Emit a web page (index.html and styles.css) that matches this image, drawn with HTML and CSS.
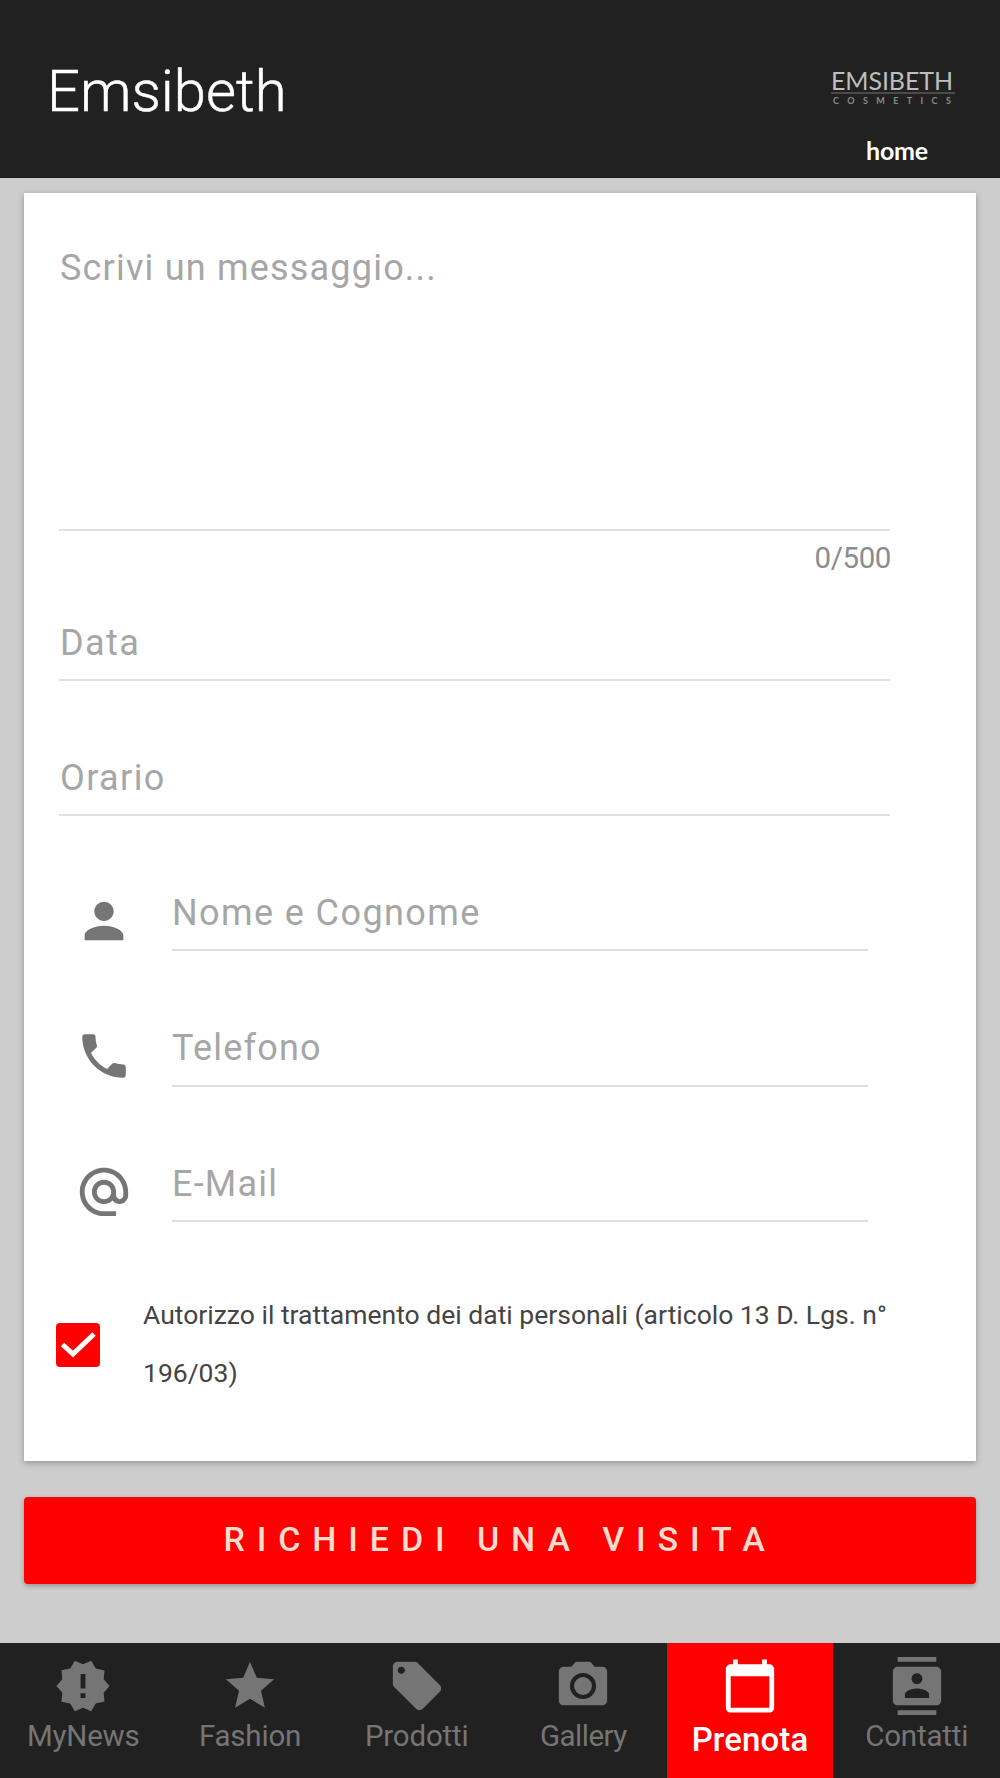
FILE: index.html
```html
<!DOCTYPE html>
<html lang="it">
<head>
<meta charset="utf-8">
<title>Emsibeth</title>
<link rel="stylesheet" href="styles.css">
</head>
<body>
<header class="topbar">
  <h1 class="title">Emsibeth</h1>
  <div class="brand">
    <div class="logo">EMSIBETH</div>
    <div class="logo-sub">COSMETICS</div>
    <a class="home">home</a>
  </div>
</header>
<main class="content">
  <form class="card">
    <div class="message">Scrivi un messaggio...</div>
    <div class="counter">0/500</div>
    <div class="field field-date">Data</div>
    <div class="field">Orario</div>
    <div class="icon-row">
      <svg class="icon" viewBox="0 0 24 24"><path d="M12 12c2.21 0 4-1.79 4-4s-1.79-4-4-4-4 1.79-4 4 1.79 4 4 4zm0 2c-2.67 0-8 1.34-8 4v2h16v-2c0-2.66-5.33-4-8-4z"/></svg>
      <div class="field">Nome e Cognome</div>
    </div>
    <div class="icon-row tight">
      <svg class="icon" viewBox="0 0 24 24"><path d="M6.62 10.79c1.44 2.83 3.76 5.14 6.59 6.59l2.2-2.2c.27-.27.67-.36 1.02-.24 1.12.37 2.33.57 3.57.57.55 0 1 .45 1 1V20c0 .55-.45 1-1 1-9.39 0-17-7.61-17-17 0-.55.45-1 1-1h3.5c.55 0 1 .45 1 1 0 1.25.2 2.45.57 3.57.11.35.03.74-.25 1.02l-2.2 2.2z"/></svg>
      <div class="field">Telefono</div>
    </div>
    <div class="icon-row tight">
      <svg class="icon" viewBox="0 0 24 24"><path d="M12 1.95c-5.52 0-10 4.48-10 10s4.48 10 10 10h5v-2h-5c-4.34 0-8-3.66-8-8s3.66-8 8-8 8 3.66 8 8v1.43c0 .79-.71 1.57-1.5 1.57s-1.5-.78-1.5-1.57v-1.43c0-2.76-2.24-5-5-5s-5 2.24-5 5 2.24 5 5 5c1.38 0 2.64-.56 3.54-1.47.65.89 1.77 1.47 2.96 1.47 1.97 0 3.5-1.6 3.5-3.57v-1.43c0-5.52-4.48-10-10-10zm0 13c-1.66 0-3-1.34-3-3s1.34-3 3-3 3 1.34 3 3-1.34 3-3 3z"/></svg>
      <div class="field">E-Mail</div>
    </div>
    <div class="consent">
      <svg class="checkbox" viewBox="0 0 44 44"><rect width="44" height="44" rx="4"/><path d="M6.5 21.5 17 31 38 11"/></svg>
      <p class="consent-text">Autorizzo il trattamento dei dati personali (articolo 13 D. Lgs. n°<br>196/03)</p>
    </div>
  </form>
  <button class="submit">RICHIEDI UNA VISITA</button>
</main>
<nav class="tabs">
  <a class="tab"><svg class="icon" viewBox="0 0 24 24"><path d="M23 12l-2.44-2.78.34-3.68-3.61-.82-1.89-3.18L12 3 8.6 1.54 6.71 4.72l-3.61.81.34 3.68L1 12l2.44 2.78-.34 3.69 3.61.82 1.89 3.18L12 21l3.4 1.46 1.89-3.18 3.61-.82-.34-3.68L23 12zm-10 5h-2v-2h2v2zm0-4h-2V7h2v6z"/></svg>MyNews</a>
  <a class="tab"><svg class="icon" viewBox="0 0 24 24"><path d="M12 17.27 18.18 21l-1.64-7.03L22 9.24l-7.19-.61L12 2 9.19 8.63 2 9.24l5.46 4.73L5.82 21z"/></svg>Fashion</a>
  <a class="tab"><svg class="icon" viewBox="0 0 24 24"><path d="M21.41 11.58l-9-9C12.05 2.22 11.55 2 11 2H4c-1.1 0-2 .9-2 2v7c0 .55.22 1.05.59 1.42l9 9c.36.36.86.58 1.41.58.55 0 1.05-.22 1.41-.59l7-7c.37-.36.59-.86.59-1.41 0-.55-.23-1.06-.59-1.42zM5.5 7C4.67 7 4 6.33 4 5.5S4.67 4 5.5 4 7 4.67 7 5.5 6.33 7 5.5 7z"/></svg>Prodotti</a>
  <a class="tab tab-gallery"><svg class="icon" viewBox="0 0 24 24"><path fill-rule="evenodd" d="M9 2 7.17 4H4c-1.1 0-2 .9-2 2v12c0 1.1.9 2 2 2h16c1.1 0 2-.9 2-2V6c0-1.1-.9-2-2-2h-3.17L15 2zM12 6.6a5.4 5.4 0 1 0 0 10.8 5.4 5.4 0 0 0 0-10.8z"/><circle cx="12" cy="12" r="3.7"/></svg>Gallery</a>
  <a class="tab active"><svg class="icon" viewBox="0 0 24 24"><path d="M20 3h-1V1h-2v2H7V1H5v2H4c-1.1 0-2 .9-2 2v16c0 1.1.9 2 2 2h16c1.1 0 2-.9 2-2V5c0-1.1-.9-2-2-2zm0 18H4V8h16v13z"/></svg>Prenota</a>
  <a class="tab"><svg class="icon" viewBox="0 0 24 24"><path d="M20 0H4v2h16V0zM4 24h16v-2H4v2zM20 4H4c-1.1 0-2 .9-2 2v12c0 1.1.9 2 2 2h16c1.1 0 2-.9 2-2V6c0-1.1-.9-2-2-2zm-8 2.75c1.24 0 2.25 1.01 2.25 2.25s-1.01 2.25-2.25 2.25S9.75 10.24 9.75 9 10.76 6.75 12 6.75zM17 17H7v-1.5c0-1.67 3.33-2.5 5-2.5s5 .83 5 2.5V17z"/></svg>Contatti</a>
</nav>
</body>
</html>
```
FILE: styles.css
```css
* { box-sizing: border-box; }

body {
  margin: 0;
  height: 1778px;
  display: flex;
  flex-direction: column;
  background: #cdcdcd;
  font-family: Roboto, "Liberation Sans", sans-serif;
}

.topbar {
  height: 178px;
  display: flex;
  justify-content: space-between;
  padding: 0 45px 0 47px;
  background: #212121;
  border-bottom: 1px solid #1a1a1a;
}

.title {
  margin: 61px 0 0;
  font-size: 58px;
  line-height: 60px;
  font-weight: 300;
  letter-spacing: 0;
  color: #fff;
  -webkit-text-stroke: .5px #fff;
}

.brand {
  width: 124px;
  padding-top: 68px;
  display: flex;
  flex-direction: column;
  font-family: Lato, "Liberation Sans", sans-serif;
}

.logo {
  height: 26px;
  font-size: 25px;
  line-height: 25px;
  letter-spacing: -.1px;
  color: #bdbdbd;
  border-bottom: 2px solid #4a4a4a;
  white-space: nowrap;
}

.logo-sub {
  margin: 1px 0 0 2px;
  font-size: 9px;
  line-height: 12px;
  font-weight: 700;
  letter-spacing: 8.4px;
  color: #8a8a8a;
  white-space: nowrap;
}

.home {
  margin: 28px 0 0 35px;
  font-size: 25px;
  line-height: 30px;
  font-weight: 700;
  letter-spacing: -.2px;
  color: #fff;
}

.content {
  flex: 1;
  padding: 15px 24px 0;
}

.card {
  height: 1268px;
  background: #fff;
  padding: 0 35px;
  box-shadow: 0 2px 6px rgba(0, 0, 0, .28);
  font-size: 36px;
  line-height: 40px;
  color: #a6a6a6;
}

.message {
  width: 831px;
  height: 338px;
  padding: 55px 0 0 1px;
  letter-spacing: 1.2px;
  border-bottom: 2px solid #e0e0e0;
}

.counter {
  width: 832px;
  height: 54px;
  font-size: 29.5px;
  line-height: 54px;
  letter-spacing: -.4px;
  text-align: right;
  color: #8c8c8c;
}

.field {
  width: 831px;
  height: 135px;
  padding: 77px 0 0 1px;
  letter-spacing: 1.4px;
  border-bottom: 2px solid #e0e0e0;
}

.field-date {
  height: 96px;
  padding-top: 38px;
}

.icon-row {
  display: flex;
  gap: 39px;
  padding-left: 16px;
}

.icon-row .field {
  width: 696px;
  padding-left: 0;
}

.icon-row.tight .field {
  height: 135.5px;
  letter-spacing: 1.2px;
}

.icon {
  flex: none;
  width: 58px;
  height: 58px;
  fill: #757575;
}

.icon-row .icon { margin-top: 76px; }

.consent {
  display: flex;
  gap: 43px;
  margin: 64px 0 0 -3px;
}

.checkbox {
  flex: none;
  width: 44px;
  height: 44px;
  margin-top: 37px;
  fill: #f00;
}

.checkbox path {
  fill: none;
  stroke: #fff;
  stroke-width: 5px;
}

.consent-text {
  margin: 0;
  font-size: 26.5px;
  line-height: 58px;
  color: #444;
  white-space: nowrap;
}

.submit {
  display: block;
  width: 952px;
  height: 87px;
  margin-top: 36px;
  padding: 0 0 3px;
  border: 0;
  border-radius: 4px;
  background: #f00;
  box-shadow: 0 2px 5px rgba(0, 0, 0, .28);
  font: 500 34px Roboto, "Liberation Sans", sans-serif;
  letter-spacing: 11.9px;
  color: #ffdccb;
}

.tabs {
  height: 135px;
  display: grid;
  grid-template-columns: repeat(6, 1fr);
  background: #212121;
}

.tab {
  display: flex;
  flex-direction: column;
  align-items: center;
  padding-top: 14px;
  font-size: 29.5px;
  line-height: 43px;
  letter-spacing: -.2px;
  color: #757575;
}

.tab-gallery { letter-spacing: -.5px; }

.tab.active {
  background: #f00;
  color: #fff;
  font-size: 33px;
  font-weight: 500;
  line-height: 49px;
  letter-spacing: .1px;
}

.tab.active .icon { fill: #fff; }
```
